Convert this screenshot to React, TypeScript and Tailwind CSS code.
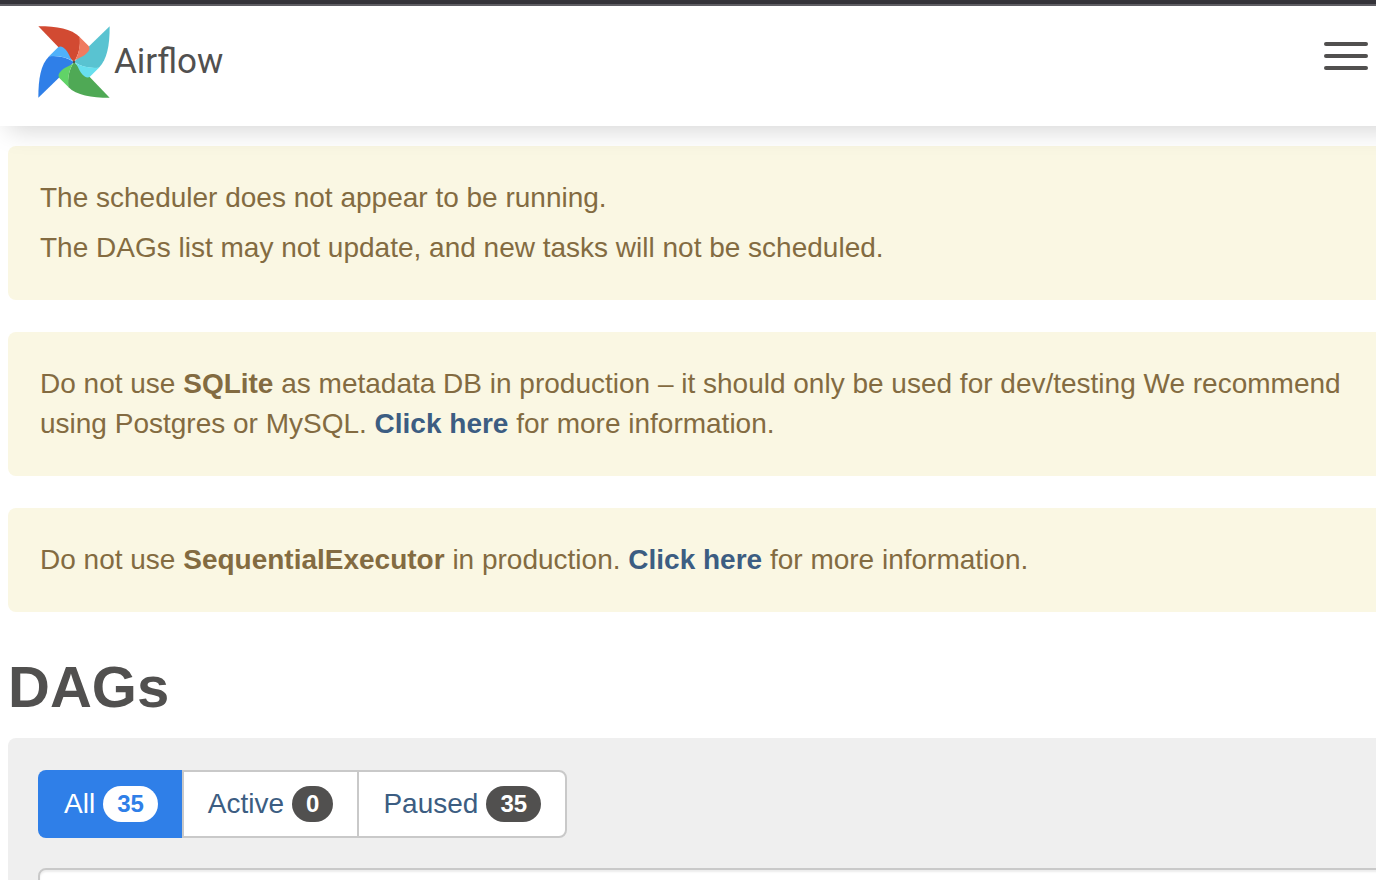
import type { ReactNode } from 'react';

const blades = [
  { angle: 0, dark: '#d24a32', light: '#ef7a60' },
  { angle: 90, dark: '#59c3d1', light: '#67dfee' },
  { angle: 180, dark: '#4fa955', light: '#61d367' },
  { angle: 270, dark: '#2f7fe8', light: '#4fb1fa' },
];

function Pinwheel() {
  return (
    <svg viewBox="25 24 214 214" className="size-18" aria-hidden="true">
      {blades.map((b) => (
        <path
          key={b.angle}
          transform={`rotate(${b.angle} 132 131)`}
          fill={b.dark}
          d="M26 25C82 25 124 32 149 57C152 84 146 110 132 131L86 87Z"
        />
      ))}
      {blades.map((b) => (
        <path
          key={b.angle}
          transform={`rotate(${b.angle} 132 131)`}
          fill={b.light}
          d="M148 56L175 83Q181 90 175 99C162 118 141 117 132 131C147 109 151 84 148 56Z"
        />
      ))}
      <circle cx="132" cy="131" r="3.5" fill="#51504f" />
    </svg>
  );
}

function Alert({ children }: { children: ReactNode }) {
  return (
    <div role="alert" className="mb-8 rounded-lg bg-[#faf7e3] p-8 leading-10 text-[#836b41]">
      {children}
    </div>
  );
}

function DocLink() {
  return (
    <a href="#docs" className="font-bold text-[#3c5d82]">
      Click here
    </a>
  );
}

const filters = [
  { label: 'All', count: 35, active: true },
  { label: 'Active', count: 0, active: false },
  { label: 'Paused', count: 35, active: false },
];

export default function App() {
  return (
    <div className="h-screen overflow-hidden bg-white font-['Liberation_Sans',Arial,sans-serif] text-[28px] text-[#51504f]">
      <div className="h-1.5 border-b-2 border-[#5f5e64] bg-[#35343a]" />
      <header className="relative -mr-8 flex h-30 items-center justify-between bg-white pr-10 pl-9.5 shadow-[0_12px_24px_-8px_rgba(0,0,0,0.17)]">
        <a href="#home" className="mb-2 flex items-center gap-1">
          <Pinwheel />
          <span className="font-['Roboto',sans-serif] text-[35px]">Airflow</span>
        </a>
        <button type="button" aria-label="Toggle navigation" className="mb-5 flex w-11 flex-col gap-2">
          <span className="h-1 rounded-xs bg-[#51504f]" />
          <span className="h-1 rounded-xs bg-[#51504f]" />
          <span className="h-1 rounded-xs bg-[#51504f]" />
        </button>
      </header>
      <main className="-mr-8 pt-5 pl-2">
        <Alert>
          <p className="mb-2.5">The scheduler does not appear to be running.</p>
          <p>The DAGs list may not update, and new tasks will not be scheduled.</p>
        </Alert>
        <Alert>
          <p className="pr-8">
            Do not use <b>SQLite</b> as metadata DB in production – it should only be used for dev/testing We recommend
            using Postgres or MySQL. <DocLink /> for more information.
          </p>
        </Alert>
        <Alert>
          <p>
            Do not use <b>SequentialExecutor</b> in production. <DocLink /> for more information.
          </p>
        </Alert>
        <h1 className="mt-10 mb-4 text-[58px] leading-[70px] font-bold">DAGs</h1>
        <section className="rounded-lg bg-[#efefef] pt-8 pr-4 pl-7.5">
          <nav aria-label="DAG status" className="flex">
            {filters.map((f) => (
              <a
                key={f.label}
                href={`#${f.label.toLowerCase()}`}
                className={
                  f.active
                    ? 'flex h-17 items-center gap-2 rounded-l-lg bg-[#2f7fe8] pr-6 pl-6.5 text-white'
                    : 'flex h-17 items-center gap-2 border-2 border-r-0 border-[#c9c9c9] bg-white px-6 text-[#3c5d82] last:rounded-r-lg last:border-r-2'
                }
              >
                {f.label}
                <span
                  className={
                    f.active
                      ? 'rounded-full bg-white px-3.5 text-[24px] leading-9 font-bold text-[#2f7fe8]'
                      : 'rounded-full bg-[#51504f] px-3.5 text-[24px] leading-9 font-bold text-white'
                  }
                >
                  {f.count}
                </span>
              </a>
            ))}
          </nav>
          <input
            type="text"
            aria-label="Filter DAGs by tag"
            className="mt-7.5 block h-17 w-full rounded-lg border-2 border-[#c9c9c9] bg-white px-6 shadow-[inset_0_2px_2px_rgba(0,0,0,0.075)]"
          />
        </section>
      </main>
    </div>
  );
}
